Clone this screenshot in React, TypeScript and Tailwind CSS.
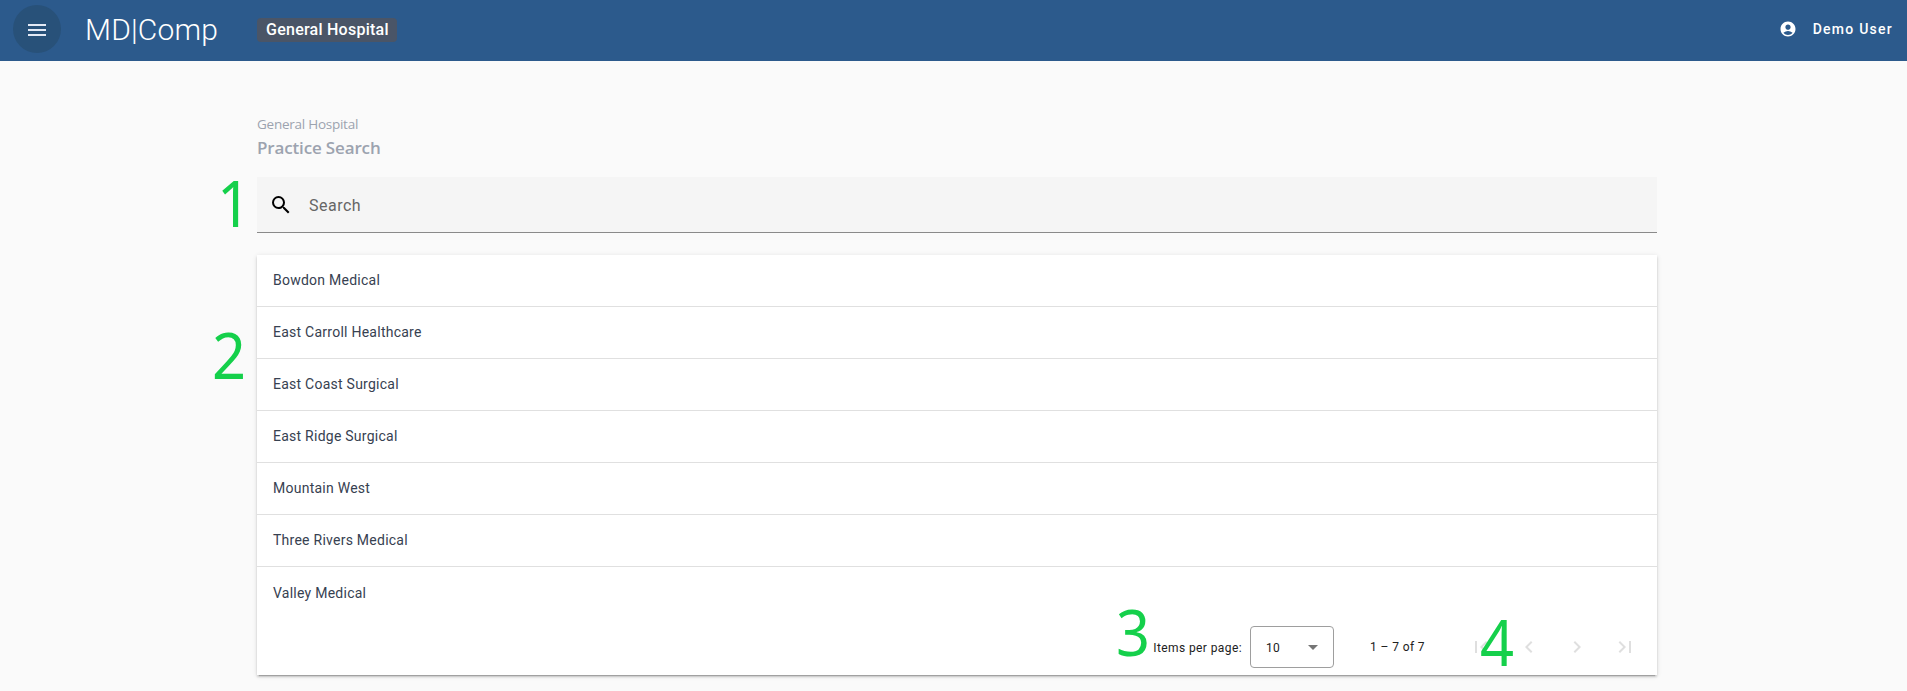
import React from 'react';
import {
  MdAccountCircle,
  MdChevronLeft,
  MdChevronRight,
  MdFirstPage,
  MdLastPage,
  MdMenu,
  MdSearch,
} from 'react-icons/md';

const practices = [
  'Bowdon Medical',
  'East Carroll Healthcare',
  'East Coast Surgical',
  'East Ridge Surgical',
  'Mountain West',
  'Three Rivers Medical',
  'Valley Medical',
];

// Numbered callout drawn over the page
const Marker = ({ label, className }: { label: string; className: string }) => (
  <span
    className={`absolute font-['Noto_Sans',sans-serif] text-[64px] leading-[64px] text-[#15d04b] pointer-events-none origin-left scale-x-[0.93] ${className}`}
  >
    {label}
  </span>
);

const Header = () => (
  <header className="h-[61px] bg-[#2c5a8c] text-white flex items-center pl-[13px] pr-[14px] pb-[3px]">
    <button className="size-12 rounded-full bg-[#285179] flex items-center justify-center">
      <MdMenu className="size-6 text-[#e3e9f5] relative top-px" />
    </button>
    <h1 className="ml-6 w-[172px] pt-px text-[30px] leading-9 font-light tracking-[0.2px]">MD|Comp</h1>
    <span className="h-6 mt-px pl-[9px] pr-2 rounded bg-[#4a5567] text-base leading-6 font-medium tracking-[0.25px]">
      General Hospital
    </span>
    <div className="ml-auto flex items-center">
      <MdAccountCircle className="size-[18px]" />
      <span className="ml-4 text-sm font-medium tracking-[1.25px]">Demo User</span>
    </div>
  </header>
);

const PageButton = ({ children }: { children: React.ReactNode }) => (
  <button disabled className="size-12 flex items-center justify-center text-[#dfdfdf]">
    {children}
  </button>
);

const Paginator = () => (
  <div className="mt-1 flex items-center justify-end pr-2 text-xs text-[#212121] tracking-[0.4px]">
    <span className="mr-2 pt-px">Items per page:</span>
    <div className="w-[84px] h-[42px] rounded border border-[#9e9e9e] flex items-center justify-between px-[15px]">
      <span className="pt-px">10</span>
      <svg className="w-[10px] h-[5px] fill-[#757575]" viewBox="0 0 10 5">
        <path d="M0 0l5 5 5-5z" />
      </svg>
    </div>
    <span className="ml-9 mr-8">1 – 7 of 7</span>
    <PageButton><MdFirstPage className="size-6" /></PageButton>
    <PageButton><MdChevronLeft className="size-6" /></PageButton>
    <PageButton><MdChevronRight className="size-6" /></PageButton>
    <PageButton><MdLastPage className="size-6" /></PageButton>
  </div>
);

function App() {
  return (
    <div className="relative h-[691px] overflow-hidden bg-[#fafafa] font-[Roboto,sans-serif]">
      <Header />

      <main className="w-[1400px] ml-[257px] pt-[53px]">
        <div className="font-['Open_Sans',sans-serif] text-[#9ca3af]">
          <p className="text-[13.5px] leading-5 tracking-[-0.25px]">General Hospital</p>
          <h2 className="text-[17px] leading-7 font-semibold tracking-[-0.15px]">Practice Search</h2>
        </div>

        <div className="mt-[15px] h-14 bg-[#f5f5f5] border-b border-[#8a8a8a] flex items-center">
          <MdSearch className="size-6 ml-3 text-black" />
          <span className="ml-4 pt-0.5 text-base tracking-[0.5px] text-[#666666]">Search</span>
        </div>

        <div className="mt-[22px] h-[420px] bg-white shadow-[0_3px_1px_-2px_rgba(0,0,0,0.2),0_2px_2px_0_rgba(0,0,0,0.14),0_1px_5px_0_rgba(0,0,0,0.12)]">
          <ul>
            {practices.map((name) => (
              <li
                key={name}
                className="h-[52px] pl-4 pb-px flex items-center border-b border-[#e0e0e0] last:border-b-0 last:pt-px text-sm tracking-[0.25px] text-[#374151]"
              >
                {name}
              </li>
            ))}
          </ul>
          <Paginator />
        </div>
      </main>

      <Marker label="1" className="left-[217px] top-[171px]" />
      <Marker label="2" className="left-[212px] top-[323px]" />
      <Marker label="3" className="left-[1116px] top-[600px]" />
      <Marker label="4" className="left-[1480px] top-[610px]" />
    </div>
  );
}

export default App;
